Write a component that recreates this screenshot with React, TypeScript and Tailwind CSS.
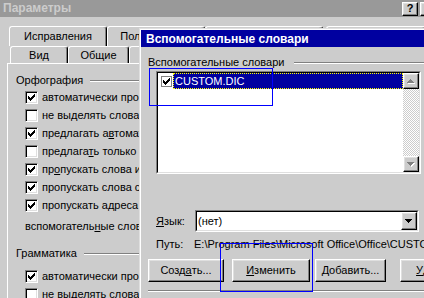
import React from "react";

const raised =
  "border border-t-white border-l-white border-b-black border-r-black shadow-[inset_-1px_-1px_0_#808080,inset_1px_1px_0_#dfdfdf] bg-[#cccccc]";

function Check() {
  const px: [number, number][] = [
    [6, 0], [5, 1], [6, 1], [0, 2], [4, 2], [5, 2], [6, 2],
    [0, 3], [1, 3], [3, 3], [4, 3], [5, 3],
    [0, 4], [1, 4], [2, 4], [3, 4], [4, 4],
    [1, 5], [2, 5], [3, 5], [2, 6],
  ];
  return (
    <svg width="7" height="7" viewBox="0 0 7 7" shapeRendering="crispEdges">
      {px.map(([x, y]) => (
        <rect key={`${x}-${y}`} x={x} y={y} width="1" height="1" fill="#000" />
      ))}
    </svg>
  );
}

function Arrow({ dir, color, shadow }: { dir: "up" | "down"; color: string; shadow?: boolean }) {
  const rows = dir === "up" ? [[3, 3], [2, 4], [1, 5], [0, 6]] : [[0, 6], [1, 5], [2, 4], [3, 3]];
  return (
    <svg width="8" height="5" viewBox="0 0 8 5" shapeRendering="crispEdges">
      {shadow &&
        rows.map(([a, b], y) => (
          <rect key={`s${y}`} x={a + 1} y={y + 1} width={b - a + 1} height="1" fill="#ffffff" />
        ))}
      {rows.map(([a, b], y) => (
        <rect key={`r${y}`} x={a} y={y} width={b - a + 1} height="1" fill={color} />
      ))}
    </svg>
  );
}

function CB({ checked }: { checked: boolean }) {
  return (
    <div className="w-[13px] h-[13px] shrink-0 border border-t-[#808080] border-l-[#808080] border-b-white border-r-white bg-white shadow-[inset_1px_1px_0_#000,inset_-1px_-1px_0_#dfdfdf] flex items-center justify-center">
      {checked && <Check />}
    </div>
  );
}

function Tab({ label, cls }: { label: string; cls: string }) {
  return (
    <div
      className={`${cls} shrink-0 border-l border-t border-r border-l-white border-t-white border-r-black rounded-t-[3px] shadow-[inset_-1px_0_0_#808080] flex items-center justify-center whitespace-nowrap overflow-hidden`}
    >
      {label}
    </div>
  );
}

function Row({ checked, children }: { checked: boolean; children: React.ReactNode }) {
  return (
    <div className="h-[18px] flex items-center pl-[17px] gap-[4px] whitespace-nowrap">
      <CB checked={checked} />
      <span className="leading-[13px]">{children}</span>
    </div>
  );
}

function GroupLine() {
  return <div className="flex-1 h-[2px] border-t border-b border-t-[#808080] border-b-white" />;
}

export default function App() {
  return (
    <div className="relative w-[424px] h-[298px] overflow-hidden bg-[#cccccc] text-black text-[11px] font-['Liberation_Sans',Arial,sans-serif]">
      {/* Back window: Параметры */}
      <div className="flex flex-col">
        <div className="h-[17px] bg-[#999999] flex items-center">
          <div className="w-[402px] shrink-0 pl-[3px] text-[12px] font-bold text-[#cccccc] leading-[17px]">
            Параметры
          </div>
          <div className={`${raised} w-[16px] h-[14px] shrink-0 flex items-center justify-center text-[11px] font-bold leading-none`}>
            ?
          </div>
          <div className={`${raised} w-[16px] h-[14px] shrink-0 ml-[2px]`} />
        </div>
        <div className="h-[9px]" />
        <div className="h-[20px] flex pl-[9px] leading-[13px]">
          <Tab label="Исправления" cls="w-[98px]" />
          <Tab label="Пользователь" cls="w-[98px]" />
          <Tab label="Совместимость" cls="w-[118px] mr-[3px]" />
          <Tab label="Расположение" cls="w-[100px]" />
        </div>
        <div className="h-[17px] flex pl-[10px] leading-[13px]">
          <Tab label="Вид" cls="w-[58px]" />
          <Tab label="Общие" cls="w-[61px]" />
          <Tab label="Печать" cls="w-[60px]" />
        </div>
        <div className="ml-[7px] h-[240px] border-l border-t border-white flex flex-col">
          <div className="mt-[10px] h-[13px] flex items-center pl-[8px] leading-[13px] pr-2">
            <span className="whitespace-nowrap">Орфография</span>
            <div className="ml-[7px] flex-1 flex">
              <GroupLine />
            </div>
          </div>
          <div className="mt-[1px] flex flex-col">
            <Row checked>автоматически проверять орфографию</Row>
            <Row checked={false}>не выделять слова с ошибками</Row>
            <Row checked>
              предлагать а<u>в</u>томатически
            </Row>
            <Row checked={false}>
              предлага<u>т</u>ь только из основного словаря
            </Row>
            <Row checked>
              пр<u>о</u>пускать слова из прописных букв
            </Row>
            <Row checked>пропускать слова с цифрами</Row>
            <Row checked>пропускать адреса Интернета и имена файлов</Row>
          </div>
          <div className="mt-[4px] h-[18px] flex items-center pl-[17px] whitespace-nowrap leading-[13px]">
            вспомогатель<u>н</u>ые словари
          </div>
          <div className="mt-[12px] h-[13px] flex items-center pl-[8px] leading-[13px] pr-2">
            <span className="whitespace-nowrap">Грамматика</span>
            <div className="ml-[7px] flex-1 flex">
              <GroupLine />
            </div>
          </div>
          <div className="mt-[7px] flex flex-col">
            <Row checked>автоматически проверять грамматику</Row>
            <Row checked={false}>не выделять слова с ошибками</Row>
          </div>
        </div>
      </div>

      {/* Front dialog: Вспомогательные словари */}
      <div className="absolute left-[139px] top-[28px] w-[300px] h-[280px] border-l border-t border-[#dfdfdf] bg-[#cccccc]">
        <div className="h-full border-l border-t border-white flex flex-col">
          <div className="h-[17px] shrink-0 bg-[#0000a0] flex items-center pl-[5px] text-white font-bold text-[12px] whitespace-nowrap">
            Вспомогательные словари
          </div>
          <div className="mt-[9px] h-[13px] flex items-center pl-[7px] leading-[13px]">
            <span className="whitespace-nowrap">Вспомогательные словари</span>
            <div className="ml-[10px] flex-1 flex mr-[6px]">
              <GroupLine />
            </div>
          </div>
          {/* listbox */}
          <div className="mt-[2px] ml-[15px] w-[265px] h-[103px] shrink-0 border border-t-[#808080] border-l-[#808080] border-b-white border-r-white">
            <div className="w-full h-full border border-t-black border-l-black border-b-[#dfdfdf] border-r-[#dfdfdf] bg-white flex">
              <div className="flex-1 flex flex-col">
                <div className="h-[16px] flex items-center">
                  <div className="ml-[3px] w-[11px] h-[11px] border border-[#808080] bg-white flex items-center justify-center">
                    <Check />
                  </div>
                  <div className="ml-[1px] flex-1 h-[16px] bg-[#0000a0] border border-dotted border-[#ffff00] text-white flex items-center pl-[1px] leading-[13px]">
                    CUSTOM.DIC
                  </div>
                </div>
              </div>
              <div className="w-[16px] flex flex-col">
                <div className={`${raised} w-[16px] h-[16px] shrink-0 flex items-center justify-center`}>
                  <Arrow dir="up" color="#808080" shadow />
                </div>
                <div className="flex-1 bg-[repeating-conic-gradient(#ffffff_0_25%,#cccccc_0_50%)] bg-[length:2px_2px]" />
                <div className={`${raised} w-[16px] h-[16px] shrink-0 flex items-center justify-center`}>
                  <Arrow dir="down" color="#808080" shadow />
                </div>
              </div>
            </div>
          </div>
          {/* language */}
          <div className="mt-[36px] h-[22px] flex items-center pl-[15px]">
            <span className="w-[39px] shrink-0 leading-[13px]">
              <u>Я</u>зык:
            </span>
            <div className="w-[224px] h-[22px] shrink-0 border border-t-[#808080] border-l-[#808080] border-b-white border-r-white">
              <div className="w-full h-full border border-t-black border-l-black border-b-[#dfdfdf] border-r-[#dfdfdf] bg-white flex items-center">
                <span className="flex-1 pl-[1px] leading-[13px]">(нет)</span>
                <div className={`${raised} w-[16px] h-[18px] flex items-center justify-center`}>
                  <Arrow dir="down" color="#000000" />
                </div>
              </div>
            </div>
          </div>
          {/* path */}
          <div className="mt-[6px] h-[13px] flex items-center pl-[15px] leading-[13px] whitespace-nowrap">
            <span className="w-[38px] shrink-0">Путь:</span>
            <span>{"E:\\Program Files\\Microsoft Office\\Office\\CUSTOM.DIC"}</span>
          </div>
          {/* buttons */}
          <div className="mt-[8px] h-[23px] flex pl-[7px] leading-[13px] whitespace-nowrap">
            <div className={`${raised} w-[76px] h-[23px] shrink-0 flex items-center justify-center`}>
              Созд<u>а</u>ть...
            </div>
            <div className={`${raised} ml-[8px] w-[78px] h-[23px] shrink-0 flex items-center justify-center`}>
              <u>И</u>зменить
            </div>
            <div className={`${raised} ml-[5px] w-[71px] h-[23px] shrink-0 flex items-center justify-center`}>
              <u>Д</u>обавить...
            </div>
            <div className={`${raised} ml-[14px] w-[75px] h-[23px] shrink-0 flex items-center justify-center`}>
              <u>У</u>далить
            </div>
          </div>
          <div className="mt-[8px] ml-[7px] mr-[6px] flex">
            <GroupLine />
          </div>
        </div>
      </div>

      {/* Blue annotation rectangles */}
      <div className="absolute left-[149px] top-[68px] w-[124px] h-[38px] border border-[#0000ff] pointer-events-none" />
      <div className="absolute left-[220px] top-[243px] w-[93px] h-[49px] border border-[#0000ff] pointer-events-none" />
    </div>
  );
}
